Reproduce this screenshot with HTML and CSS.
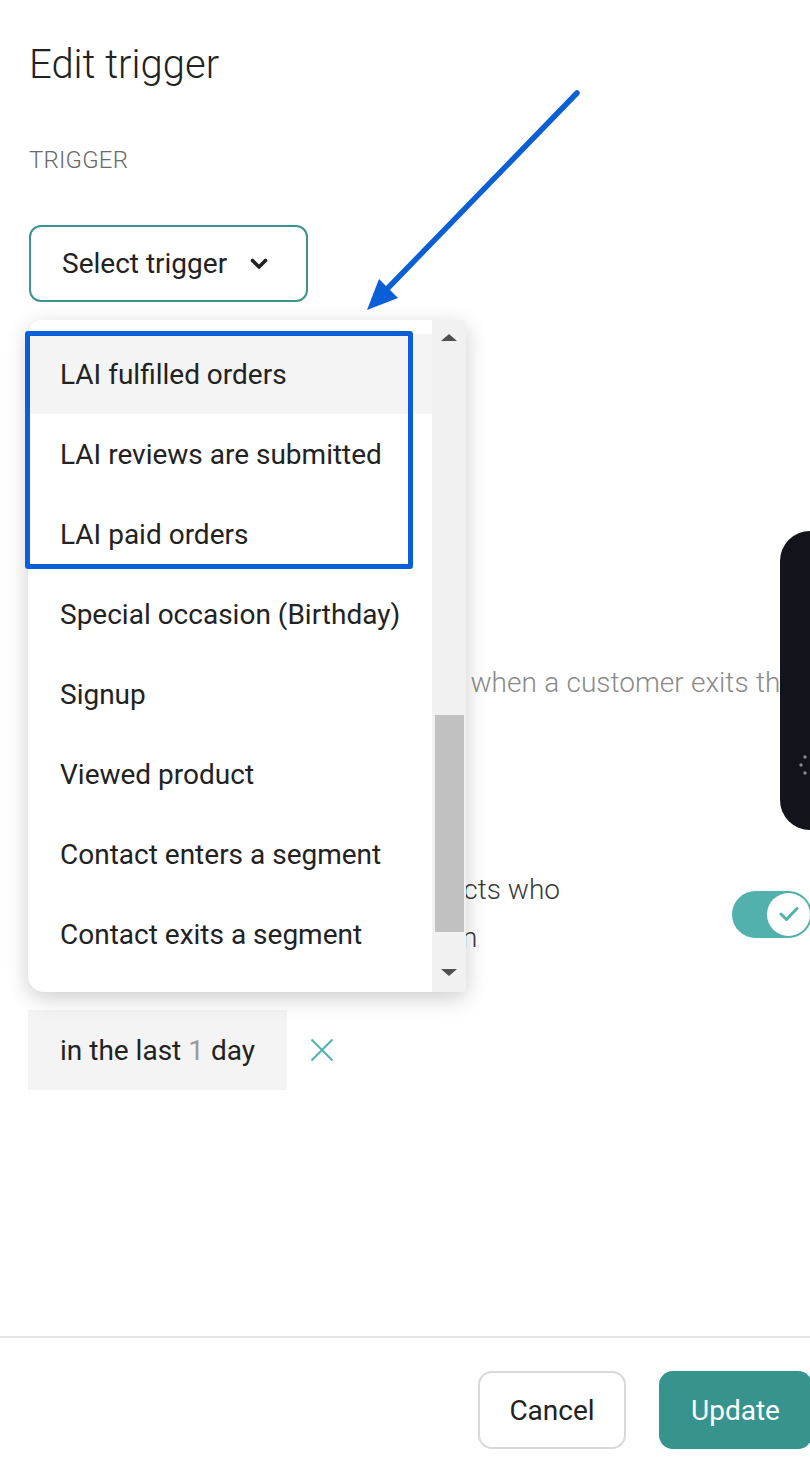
FILE: index.html
```html
<!DOCTYPE html>
<html lang="en">
<head>
<meta charset="utf-8">
<title>Edit trigger</title>
<link rel="stylesheet" href="styles.css">
</head>
<body>
<div class="page">
  <main class="content">
    <h1 class="title">Edit trigger</h1>
    <div class="label">TRIGGER</div>
    <div class="select-wrap">
      <button class="select" type="button">
        <span>Select trigger</span>
        <svg class="chevron" width="18" height="12" viewBox="0 0 18 12"><path d="M2.5 2.5 L9 9 L15.5 2.5" fill="none" stroke="#222" stroke-width="3.6" stroke-linecap="round" stroke-linejoin="round"/></svg>
      </button>
      <div class="dropdown">
        <ul class="options">
          <li class="option active">LAI fulfilled orders</li>
          <li class="option">LAI reviews are submitted</li>
          <li class="option">LAI paid orders</li>
          <li class="option">Special occasion (Birthday)</li>
          <li class="option">Signup</li>
          <li class="option">Viewed product</li>
          <li class="option">Contact enters a segment</li>
          <li class="option">Contact exits a segment</li>
        </ul>
        <div class="scrollbar">
          <span class="sb-arrow up"></span>
          <div class="sb-track"><div class="sb-thumb"></div></div>
          <span class="sb-arrow down"></span>
        </div>
      </div>
    </div>
    <p class="hint">This automation will be re-triggered when a customer exits the segment</p>
    <div class="reentry">
      <p class="reentry-text">Allow automation to rerun for contacts who<br>have already been in this automation</p>
      <span class="toggle"><span class="knob"><svg width="22" height="18" viewBox="0 0 22 18"><path d="M3 9 L8.5 14.5 L19 3.5" fill="none" stroke="#52b1ad" stroke-width="3" stroke-linecap="round" stroke-linejoin="round"/></svg></span></span>
    </div>
    <div class="filter">
      <span class="chip">in the last <span class="num">1</span> day</span>
      <svg class="remove" width="24" height="24" viewBox="0 0 24 24"><path d="M1.5 1.5 L22.5 22.5 M22.5 1.5 L1.5 22.5" stroke="#52b1ad" stroke-width="2"/></svg>
    </div>
  </main>
  <footer class="footer">
    <button class="btn cancel" type="button">Cancel</button>
    <button class="btn primary" type="button">Update</button>
  </footer>
  <div class="widget">
    <svg class="spinner" width="60" height="90" viewBox="0 0 60 90">
      <circle cx="32" cy="28" r="1.7" fill="#8a8a8a"/>
      <circle cx="25" cy="36" r="1.7" fill="#8a8a8a"/>
      <circle cx="21" cy="44" r="1.7" fill="#8a8a8a"/>
      <circle cx="25" cy="52" r="1.7" fill="#8a8a8a"/>
      <circle cx="32" cy="60" r="1.7" fill="#8a8a8a"/>
    </svg>
  </div>
  <div class="annot-box"></div>
  <svg class="annot-arrow" width="810" height="400" viewBox="0 0 810 400">
    <line x1="577" y1="93" x2="388" y2="288" stroke="#0a5fd6" stroke-width="5.5" stroke-linecap="round"/>
    <polygon points="367,310 379,279 398,298" fill="#0a5fd6"/>
  </svg>
</div>
</body>
</html>
```

FILE: styles.css
```css
* { box-sizing: border-box; }
html, body { margin: 0; padding: 0; }
body {
  width: 810px;
  height: 1474px;
  overflow: hidden;
  background: #fff;
  font-family: Roboto, "Liberation Sans", Arial, sans-serif;
  color: #222;
}
.page {
  position: relative;
  width: 840px;
  min-height: 1474px;
  display: flex;
  flex-direction: column;
}
.content {
  flex: 1;
  padding: 41px 28px 0 29px;
}
.title {
  margin: 0;
  font-size: 40px;
  line-height: 48px;
  font-weight: 300;
  color: #222;
}
.label {
  margin-top: 55px;
  font-size: 24px;
  line-height: 32px;
  font-weight: 300;
  color: #6a6a6a;
  letter-spacing: 0.2px;
}
.select-wrap {
  position: relative;
  margin-top: 49px;
  width: 279px;
}
.select {
  display: flex;
  align-items: center;
  gap: 23px;
  width: 279px;
  height: 77px;
  padding: 0 38px 0 31px;
  background: #fff;
  border: 2px solid #3c948e;
  border-radius: 12px;
  font-family: inherit;
  font-size: 28px;
  color: #222;
  white-space: nowrap;
}
.chevron { flex: none; }
.dropdown {
  position: absolute;
  top: calc(100% + 18px);
  left: -1px;
  width: 438px;
  height: 672px;
  display: flex;
  background: #fff;
  border-radius: 14px 4px 4px 16px;
  box-shadow: 0 6px 22px rgba(0,0,0,0.2);
  overflow: hidden;
  z-index: 5;
}
.options {
  flex: 1;
  list-style: none;
  margin: 0;
  padding: 14px 0 18px;
}
.option {
  height: 80px;
  display: flex;
  align-items: center;
  padding-left: 32px;
  font-size: 28px;
  color: #222;
  white-space: nowrap;
}
.option.active { background: #f4f4f4; }
.scrollbar {
  width: 34px;
  background: #f1f1f1;
  display: flex;
  flex-direction: column;
  align-items: center;
}
.sb-arrow {
  width: 0;
  height: 0;
  border-left: 8px solid transparent;
  border-right: 8px solid transparent;
}
.sb-arrow.up { border-bottom: 7px solid #505050; margin-top: 14px; }
.sb-arrow.down { border-top: 7px solid #505050; margin-bottom: 16px; }
.sb-track {
  flex: 1;
  width: 100%;
  padding: 0 2px 0 3px;
  display: flex;
  flex-direction: column;
}
.sb-thumb {
  margin-top: 374px;
  height: 217px;
  background: #c1c1c1;
}
.hint {
  margin: 361px 0 0;
  font-size: 28px;
  line-height: 40px;
  font-weight: 300;
  color: #8a8a8a;
  white-space: nowrap;
  word-spacing: 0.5px;
}
.reentry {
  margin-top: 163px;
  display: flex;
  align-items: center;
  justify-content: space-between;
}
.reentry-text {
  margin: 0;
  font-size: 28px;
  line-height: 48px;
  font-weight: 300;
  color: #3a3a3a;
  white-space: nowrap;
}
.toggle {
  width: 80px;
  height: 47px;
  border-radius: 24px;
  background: #52b1ad;
  display: flex;
  align-items: center;
  justify-content: flex-end;
  padding-right: 2px;
}
.knob {
  width: 43px;
  height: 43px;
  border-radius: 50%;
  background: #fff;
  display: flex;
  align-items: center;
  justify-content: center;
}
.filter {
  margin-top: 48px;
  display: flex;
  align-items: center;
  gap: 23px;
}
.chip {
  height: 80px;
  display: inline-flex;
  align-items: center;
  padding: 0 32px;
  margin-left: -1px;
  background: #f4f4f4;
  font-size: 28px;
  color: #222;
  white-space: pre;
}
.chip .num { color: #9a9a9a; }
.footer {
  border-top: 2px solid #e6e6e6;
  padding: 33px 28px 25px 0;
  display: flex;
  justify-content: flex-end;
  gap: 33px;
}
.btn {
  height: 78px;
  border-radius: 14px;
  font-family: inherit;
  font-size: 28px;
}
.cancel {
  width: 148px;
  background: #fff;
  border: 2px solid #d9d9d9;
  color: #222;
}
.primary {
  width: 153px;
  background: #36938d;
  border: none;
  color: #fff;
}
.widget {
  position: absolute;
  left: 780px;
  top: 531px;
  width: 90px;
  height: 299px;
  background: #13141b;
  border-radius: 30px;
  z-index: 2;
}
.spinner {
  position: absolute;
  left: 0;
  top: 190px;
}
.annot-box {
  position: absolute;
  left: 25px;
  top: 331px;
  width: 388px;
  height: 238px;
  border: 5px solid #0a5fd6;
  border-radius: 3px;
  z-index: 10;
}
.annot-arrow {
  position: absolute;
  left: 0;
  top: 0;
  z-index: 10;
  pointer-events: none;
}
```
